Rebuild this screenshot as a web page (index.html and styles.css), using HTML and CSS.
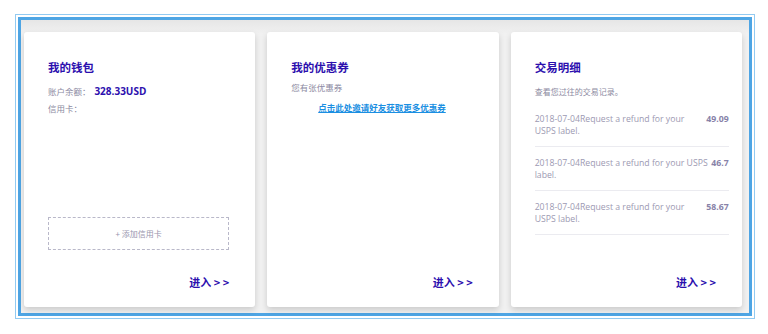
FILE: index.html
```html
<!doctype html>
<html lang="zh">
<head>
	<meta charset="utf-8">
	<title>账户中心</title>
	<link rel="stylesheet" href="styles.css">
</head>
<body>
	<div class="frame">
		<div class="board">
			<div class="card">
				<h2 class="card-title">我的钱包</h2>
				<p class="info first">账户余额： <b class="balance">328.33USD</b></p>
				<p class="info">信用卡：</p>
				<div class="add-card">+ 添加信用卡</div>
				<a class="enter">进入 &gt; &gt;</a>
			</div>
			<div class="card">
				<h2 class="card-title">我的优惠券</h2>
				<p class="note">您有张优惠券</p>
				<a class="invite">点击此处邀请好友获取更多优惠券</a>
				<a class="enter">进入 &gt; &gt;</a>
			</div>
			<div class="card">
				<h2 class="card-title">交易明细</h2>
				<p class="note small">查看您过往的交易记录。</p>
				<div class="records">
					<div class="record">
						<span class="desc">2018-07-04Request a refund for your USPS label.</span>
						<span class="sum">49.09</span>
					</div>
					<div class="record">
						<span class="desc">2018-07-04Request a refund for your USPS label.</span>
						<span class="sum">46.7</span>
					</div>
					<div class="record">
						<span class="desc">2018-07-04Request a refund for your USPS label.</span>
						<span class="sum">58.67</span>
					</div>
				</div>
				<a class="enter">进入 &gt; &gt;</a>
			</div>
		</div>
	</div>
</body>
</html>
```
FILE: styles.css
```css
body{
	margin: 0;
	background: #fff;
	font-family: 'Open Sans', 'Noto Sans CJK SC', sans-serif;
}
.frame{
	box-sizing: border-box;
	margin: 14px 0 0 15px;
	width: 740px;
	height: 305px;
	border: 1px solid #92caf1;
	padding: 2px;
}
.board{
	box-sizing: border-box;
	height: 100%;
	border: 3px solid #4ea5e4;
	background: linear-gradient(#e6e6e6, #f1f1f1 14px);
	display: flex;
	gap: 12px;
	padding: 12px 7px 6px 3px;
}
.card{
	flex: 1 1 0;
	min-width: 0;
	background: #fff;
	border-radius: 3px;
	box-shadow: 0 3px 6px rgba(0,0,0,0.16);
	display: flex;
	flex-direction: column;
	padding: 26px 26px 16px 24px;
}
.card-title{
	margin: 0;
	font-family: 'Noto Sans CJK SC', sans-serif;
	font-size: 11.5px;
	line-height: 18px;
	font-weight: bold;
	color: #2c0fae;
}
.info{
	margin: 0;
	font-family: 'Noto Sans CJK SC', sans-serif;
	font-size: 8.5px;
	line-height: 17px;
	color: #8c8aa2;
}
.info.first{
	margin-top: 7px;
}
.balance{
	font-family: 'Open Sans', sans-serif;
	font-size: 10px;
	color: #2c0fae;
	margin-left: 2px;
}
.add-card{
	margin-top: auto;
	margin-bottom: 23px;
	height: 33px;
	box-sizing: border-box;
	border: 1px dashed #b9b8c9;
	display: flex;
	align-items: center;
	justify-content: center;
	font-family: 'Noto Sans CJK SC', sans-serif;
	font-size: 8px;
	color: #9896ae;
}
.enter{
	margin-top: auto;
	align-self: flex-end;
	font-family: 'Noto Sans CJK SC', sans-serif;
	font-size: 11px;
	line-height: 18px;
	font-weight: bold;
	color: #2c0fae;
}
.add-card + .enter{
	margin-top: 0;
}
.note{
	margin: 4px 0 0;
	font-family: 'Noto Sans CJK SC', sans-serif;
	font-size: 8.5px;
	line-height: 14px;
	color: #8c8aa2;
}
.note.small{
	margin-top: 9px;
	font-size: 8px;
}
.invite{
	margin-top: 6px;
	text-align: center;
	font-family: 'Noto Sans CJK SC', sans-serif;
	font-size: 8.5px;
	line-height: 14px;
	font-weight: bold;
	color: #1b8fe2;
	text-decoration: underline;
}
.records{
	margin-top: 4px;
	width: 194px;
}
.record{
	display: flex;
	padding: 10px 0 9px;
	border-bottom: 1px solid #ebebf0;
	font-size: 8.7px;
	line-height: 12px;
	color: #9c99b2;
}
.desc{
	flex: 1;
}
.sum{
	font-weight: bold;
	color: #8782a8;
}
```
